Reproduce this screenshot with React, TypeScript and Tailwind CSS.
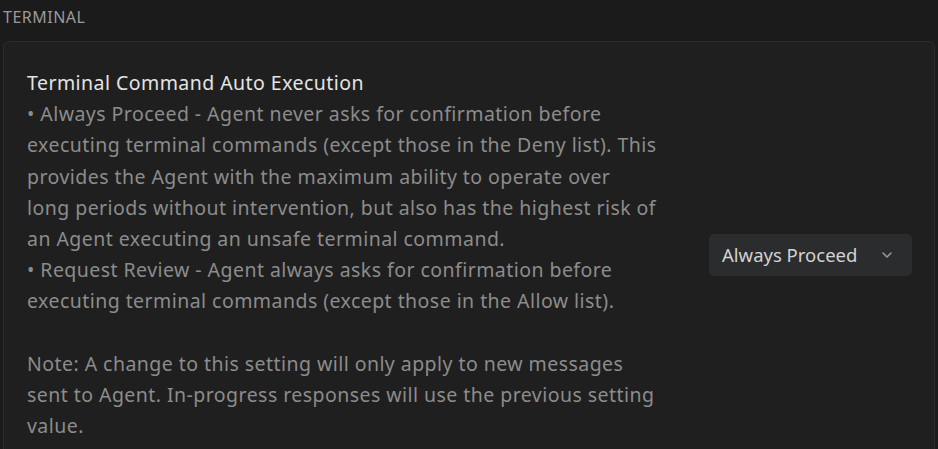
import { ChevronDown } from "lucide-react";

const lines = [
	"• Always Proceed - Agent never asks for confirmation before",
	"executing terminal commands (except those in the Deny list). This",
	"provides the Agent with the maximum ability to operate over",
	"long periods without intervention, but also has the highest risk of",
	"an Agent executing an unsafe terminal command.",
	"• Request Review - Agent always asks for confirmation before",
	"executing terminal commands (except those in the Allow list).",
	"",
	"Note: A change to this setting will only apply to new messages",
	"sent to Agent. In-progress responses will use the previous setting",
	"value.",
];

export default function App() {
	return (
		<div
			className="h-[449px] w-[938px] overflow-hidden bg-[#1b1b1b]"
			style={{ fontFamily: '"Noto Sans", "Open Sans", sans-serif' }}
		>
			<div className="h-[41px] pl-[3px] pt-[4px] text-[16px] leading-[26px] tracking-[0.5px] text-[#9a9a9a]">
				TERMINAL
			</div>
			<div className="mx-[3px] flex items-center rounded-[6px] border border-[#2b2b2b] bg-[#1f1f1f]">
				<div className="flex-1 pl-[23px] pt-[25px] pb-[27px] text-[19.5px] leading-[31.2px] tracking-[0.45px]">
					<div className="whitespace-nowrap text-[#e4e4e4]">
						Terminal Command Auto Execution
					</div>
					{lines.map((line, i) => (
						<div key={i} className="h-[31.2px] whitespace-nowrap text-[#8c8c8c]">
							{line}
						</div>
					))}
				</div>
				<div className="mr-[22px] flex h-[42px] w-[203px] items-center justify-between rounded-[5px] bg-[#2b2c2e] pl-[13px] pr-[17px]">
					<span className="text-[18.5px] text-[#d2d2d2]">Always Proceed</span>
					<ChevronDown className="h-[16px] w-[16px] text-[#9a9a9a]" strokeWidth={2.2} />
				</div>
			</div>
		</div>
	);
}
